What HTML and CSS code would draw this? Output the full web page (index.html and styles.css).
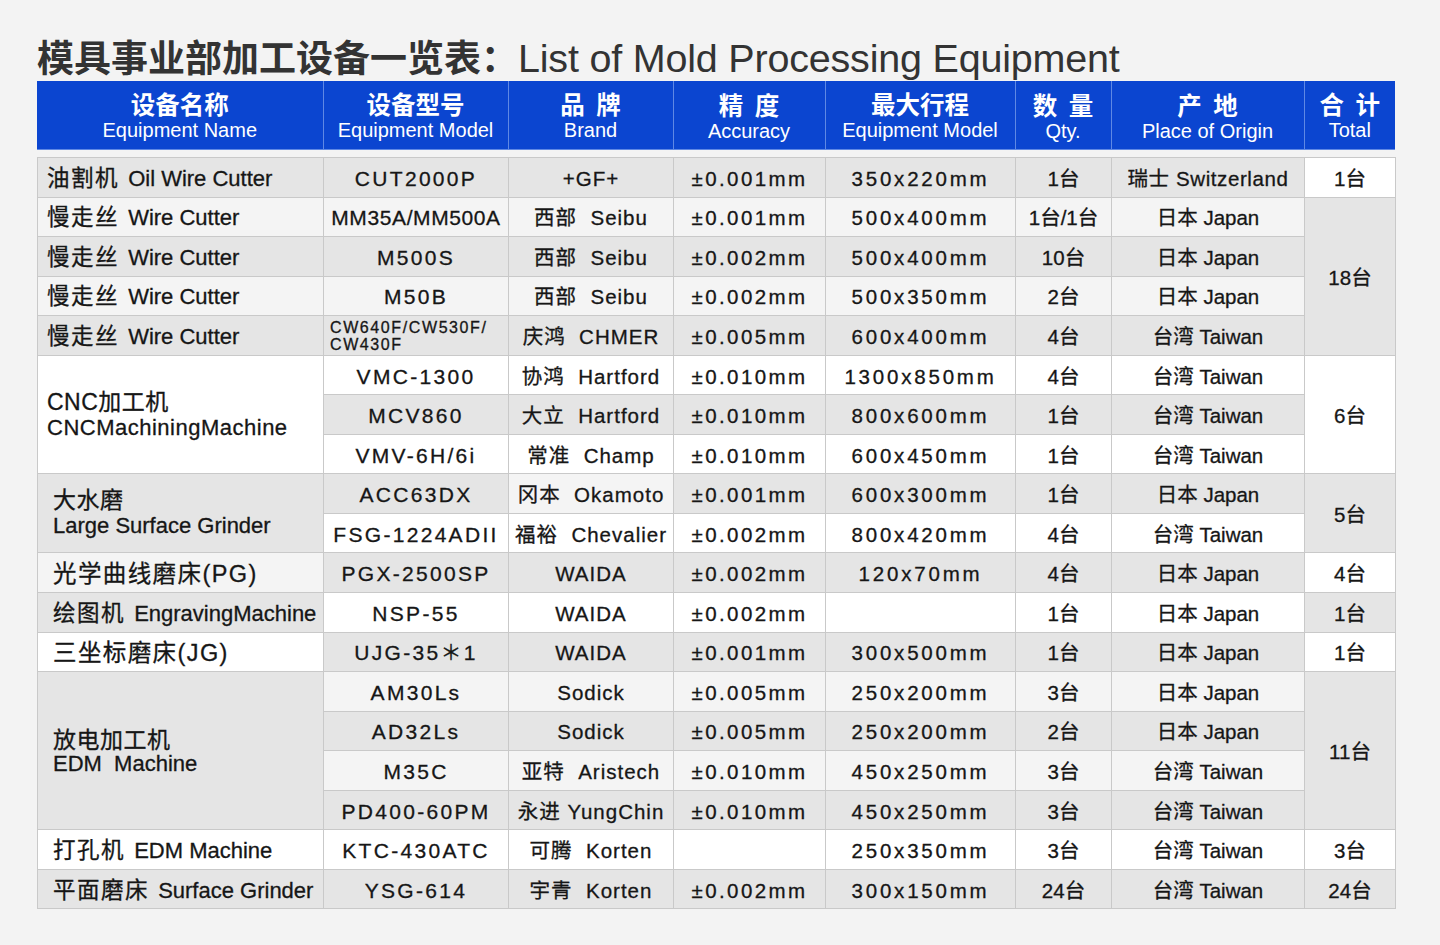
FILE: index.html
```html
<!DOCTYPE html>
<html lang="zh-CN">
<head>
<meta charset="utf-8">
<title>模具事业部加工设备一览表</title>
<link rel="stylesheet" href="styles.css">
</head>
<body>
<div class="page">
  <h1 class="title"><span class="title-cn">模具事业部加工设备一览表：</span><span class="title-en">List of Mold Processing Equipment</span></h1>

  <table class="head">
    <colgroup>
      <col class="c1"><col class="c2"><col class="c3"><col class="c4"><col class="c5"><col class="c6"><col class="c7"><col class="c8">
    </colgroup>
    <tr>
      <th><div class="cn">设备名称</div><div class="en">Equipment Name</div></th>
      <th><div class="cn">设备型号</div><div class="en">Equipment Model</div></th>
      <th><div class="cn sp">品 牌</div><div class="en">Brand</div></th>
      <th><div class="cn sp lo">精 度</div><div class="en">Accuracy</div></th>
      <th><div class="cn">最大行程</div><div class="en">Equipment Model</div></th>
      <th><div class="cn sp lo">数 量</div><div class="en">Qty.</div></th>
      <th><div class="cn sp lo">产 地</div><div class="en">Place of Origin</div></th>
      <th><div class="cn sp">合 计</div><div class="en">Total</div></th>
    </tr>
  </table>

  <table class="body">
    <colgroup>
      <col class="c1"><col class="c2"><col class="c3"><col class="c4"><col class="c5"><col class="c6"><col class="c7"><col class="c8">
    </colgroup>
    <tr class="g">
      <td class="name"><span class="ncn">油割机</span> Oil Wire Cutter</td>
      <td class="model">CUT2000P</td><td class="brand">+GF+</td><td class="prec">±0.001mm</td><td class="trav">350x220mm</td><td>1台</td><td class="swiss">瑞士 Switzerland</td>
      <td class="w">1台</td>
    </tr>
    <tr class="l">
      <td class="name"><span class="ncn">慢走丝</span> Wire Cutter</td>
      <td class="model tight">MM35A/MM500A</td><td class="brand">西部&nbsp; Seibu</td><td class="prec">±0.001mm</td><td class="trav">500x400mm</td><td>1台/1台</td><td>日本 Japan</td>
      <td class="g" rowspan="4">18台</td>
    </tr>
    <tr class="g">
      <td class="name"><span class="ncn">慢走丝</span> Wire Cutter</td>
      <td class="model">M500S</td><td class="brand">西部&nbsp; Seibu</td><td class="prec">±0.002mm</td><td class="trav">500x400mm</td><td>10台</td><td>日本 Japan</td>
    </tr>
    <tr class="l">
      <td class="name"><span class="ncn">慢走丝</span> Wire Cutter</td>
      <td class="model">M50B</td><td class="brand">西部&nbsp; Seibu</td><td class="prec">±0.002mm</td><td class="trav">500x350mm</td><td>2台</td><td>日本 Japan</td>
    </tr>
    <tr class="g">
      <td class="name"><span class="ncn">慢走丝</span> Wire Cutter</td>
      <td class="model small"><div class="clip">CW640F/CW530F/<br>CW430F</div></td><td class="brand">庆鸿&nbsp; CHMER</td><td class="prec">±0.005mm</td><td class="trav">600x400mm</td><td>4台</td><td>台湾 Taiwan</td>
    </tr>
    <tr class="w">
      <td class="name group" rowspan="3"><div class="gcn">CNC加工机</div><div class="gen cnc">CNCMachiningMachine</div></td>
      <td class="model">VMC-1300</td><td class="brand">协鸿&nbsp; Hartford</td><td class="prec">±0.010mm</td><td class="trav">1300x850mm</td><td>4台</td><td>台湾 Taiwan</td>
      <td class="w" rowspan="3">6台</td>
    </tr>
    <tr class="g">
      <td class="model">MCV860</td><td class="brand">大立&nbsp; Hartford</td><td class="prec">±0.010mm</td><td class="trav">800x600mm</td><td>1台</td><td>台湾 Taiwan</td>
    </tr>
    <tr class="w">
      <td class="model">VMV-6H/6i</td><td class="brand">常准&nbsp; Champ</td><td class="prec">±0.010mm</td><td class="trav">600x450mm</td><td>1台</td><td>台湾 Taiwan</td>
    </tr>
    <tr class="g">
      <td class="name group ind g" rowspan="2"><div class="gcn">大水磨</div><div class="gen">Large Surface Grinder</div></td>
      <td class="model">ACC63DX</td><td class="brand l">冈本&nbsp; Okamoto</td><td class="prec">±0.001mm</td><td class="trav">600x300mm</td><td>1台</td><td>日本 Japan</td>
      <td class="g" rowspan="2">5台</td>
    </tr>
    <tr class="w">
      <td class="model">FSG-1224ADII</td><td class="brand">福裕&nbsp; Chevalier</td><td class="prec">±0.002mm</td><td class="trav">800x420mm</td><td>4台</td><td>台湾 Taiwan</td>
    </tr>
    <tr class="g">
      <td class="name ind big l">光学曲线磨床(PG)</td>
      <td class="model">PGX-2500SP</td><td class="brand">WAIDA</td><td class="prec">±0.002mm</td><td class="trav">120x70mm</td><td>4台</td><td>日本 Japan</td>
      <td class="w">4台</td>
    </tr>
    <tr class="w">
      <td class="name ind g"><span class="ncn">绘图机</span> EngravingMachine</td>
      <td class="model">NSP-55</td><td class="brand">WAIDA</td><td class="prec">±0.002mm</td><td class="trav"></td><td>1台</td><td>日本 Japan</td>
      <td class="g">1台</td>
    </tr>
    <tr class="g">
      <td class="name ind big w">三坐标磨床(JG)</td>
      <td class="model">UJG-35＊1</td><td class="brand">WAIDA</td><td class="prec">±0.001mm</td><td class="trav">300x500mm</td><td>1台</td><td>日本 Japan</td>
      <td class="w">1台</td>
    </tr>
    <tr class="l">
      <td class="name group ind g" rowspan="4"><div class="gcn">放电加工机</div><div class="gen edm">EDM&nbsp; Machine</div></td>
      <td class="model">AM30Ls</td><td class="brand">Sodick</td><td class="prec">±0.005mm</td><td class="trav">250x200mm</td><td>3台</td><td>日本 Japan</td>
      <td class="g" rowspan="4">11台</td>
    </tr>
    <tr class="g">
      <td class="model">AD32Ls</td><td class="brand">Sodick</td><td class="prec">±0.005mm</td><td class="trav">250x200mm</td><td>2台</td><td>日本 Japan</td>
    </tr>
    <tr class="l">
      <td class="model">M35C</td><td class="brand">亚特&nbsp; Aristech</td><td class="prec">±0.010mm</td><td class="trav">450x250mm</td><td>3台</td><td>台湾 Taiwan</td>
    </tr>
    <tr class="g">
      <td class="model">PD400-60PM</td><td class="brand">永进 YungChin</td><td class="prec">±0.010mm</td><td class="trav">450x250mm</td><td>3台</td><td>台湾 Taiwan</td>
    </tr>
    <tr class="w">
      <td class="name ind"><span class="ncn">打孔机</span> EDM Machine</td>
      <td class="model">KTC-430ATC</td><td class="brand">可腾&nbsp; Korten</td><td class="prec"></td><td class="trav">250x350mm</td><td>3台</td><td>台湾 Taiwan</td>
      <td>3台</td>
    </tr>
    <tr class="g">
      <td class="name ind"><span class="ncn">平面磨床</span> Surface Grinder</td>
      <td class="model">YSG-614</td><td class="brand">宇青&nbsp; Korten</td><td class="prec">±0.002mm</td><td class="trav">300x150mm</td><td>24台</td><td>台湾 Taiwan</td>
      <td>24台</td>
    </tr>
  </table>
</div>
</body>
</html>
```

FILE: styles.css
```css
html, body {
  margin: 0;
  padding: 0;
  background: #f3f3f3;
}

.page {
  padding-left: 37px;
  font-family: "Liberation Sans", "Noto Sans CJK SC", sans-serif;
  color: #161616;
}

.title {
  margin: 0;
  height: 81px;
  box-sizing: border-box;
  padding-top: 35px;
  line-height: 42px;
  color: #333333;
  font-weight: normal;
  white-space: nowrap;
}

.title-cn {
  font-family: "Noto Sans CJK SC", sans-serif;
  font-size: 37px;
  font-weight: 700;
}

.title-en {
  font-family: "Liberation Sans", sans-serif;
  font-size: 39.5px;
  letter-spacing: -0.2px;
}

table {
  table-layout: fixed;
  width: 1358px;
  border-collapse: collapse;
}

.c1 { width: 286px; }
.c2 { width: 185px; }
.c3 { width: 165px; }
.c4 { width: 152px; }
.c5 { width: 190px; }
.c6 { width: 96px; }
.c7 { width: 193px; }
.c8 { width: 91px; }

/* header */
.head {
  height: 69px;
  background: #0b45d0;
  color: #ffffff;
}

.head th {
  border: 1px solid #5f88e4;
  border-top: none;
  padding: 0;
  text-align: center;
  vertical-align: middle;
  font-weight: normal;
}

.head th:first-child { border-left: none; }
.head th:last-child { border-right: none; }

.head .cn {
  font-family: "Noto Sans CJK SC", sans-serif;
  font-size: 24.5px;
  font-weight: 700;
  line-height: 29px;
}

.head .cn.sp { word-spacing: 6px; }
.head .cn.lo { padding-top: 4px; line-height: 28px; }

.head .en {
  font-family: "Liberation Sans", sans-serif;
  font-size: 20px;
  line-height: 24px;
}

/* body */
.body {
  margin-top: 7px;
  background: #ffffff;
  border: 1px solid #c9c9c9;
}

.body tr { height: 39.55px; }

.body td {
  border: 1px solid #c9c9c9;
  padding: 0;
  text-align: center;
  vertical-align: middle;
  font-size: 20.5px;
  line-height: 24px;
  padding-top: 3px;
  white-space: nowrap;
  overflow: hidden;
  -webkit-text-stroke: 0.3px currentColor;
}

.g, .body td.g { background: #e5e5e5; }
.l, .body td.l { background: #f4f4f4; }
.w, .body td.w { background: #ffffff; }

.body td.name {
  text-align: left;
  padding-left: 9px;
  font-size: 22px;
}

.ncn {
  font-size: 22.5px;
  letter-spacing: 1.5px;
  margin-right: 3px;
}

.body td.name.ind { padding-left: 15px; }

.body td.name.big {
  font-size: 23.5px;
  letter-spacing: 1.4px;
}

.body td.group { padding-top: 0; }

.gcn {
  font-size: 23px;
  line-height: 26px;
  letter-spacing: 0.5px;
}

.gen {
  font-size: 22px;
  line-height: 26px;
}

.gen.cnc { letter-spacing: 0.5px; }
.gen.edm { line-height: 21px; }

.model { letter-spacing: 2.3px; }
.body td.model { font-size: 21px; }
.model.tight { letter-spacing: 0.6px; }

.body td.small {
  text-align: left;
  padding: 0 0 0 6px;
  vertical-align: top;
}

.clip {
  height: 38px;
  overflow: hidden;
  padding-top: 3px;
  box-sizing: border-box;
  font-size: 16px;
  line-height: 17px;
  letter-spacing: 1.6px;
}

.brand { letter-spacing: 1px; }
.prec { letter-spacing: 2.4px; }
.trav { letter-spacing: 2.8px; }
.swiss { letter-spacing: 0.6px; }
```
